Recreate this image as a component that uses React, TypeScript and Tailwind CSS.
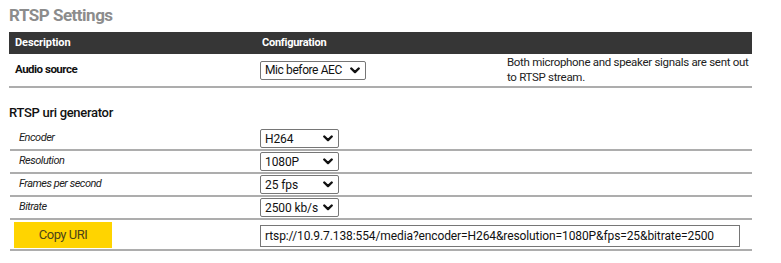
import React, { useState } from 'react';

const Chevron: React.FC = () => (
  <svg width="10" height="7" viewBox="0 0 10 7" className="shrink-0">
    <path d="M1.3 1.5 L5 5.1 L8.7 1.5" fill="none" stroke="#111" strokeWidth="2.4" strokeLinecap="round" strokeLinejoin="round" />
  </svg>
);

const SelectBox: React.FC<{ value: string; width?: string; track?: string }> = ({
  value,
  width = 'w-[79px]',
  track = 'tracking-[-0.1px]',
}) => (
  <div className={`${width} h-[19px] flex items-center justify-between gap-[4px] pl-[4px] pr-[5px] border border-[#767676] rounded-[2px] bg-white text-[12px] ${track} text-[#111] cursor-default`}>
    <span className="leading-none whitespace-nowrap">{value}</span>
    <Chevron />
  </div>
);

const GenRow: React.FC<{ label: string; value: string }> = ({ label, value }) => (
  <div className="h-[23px] flex items-center border-b-2 border-[#adadad] ml-[1px]">
    <div className="w-[246px] pl-[9px] text-[11px] italic tracking-[-0.5px] text-[#222]">{label}</div>
    <div className="pl-[4px]">
      <SelectBox value={value} />
    </div>
  </div>
);

export default function App() {
  const [copied, setCopied] = useState(false);
  const uri = 'rtsp://10.9.7.138:554/media?encoder=H264&resolution=1080P&fps=25&bitrate=2500';

  return (
    <div className="w-[781px] h-[263px] bg-white pl-[9px] pr-[29px] font-['Roboto',sans-serif] text-[#222]">
      <div className="pt-[4px] h-[32px] text-[17px] leading-[22px] font-bold tracking-[-0.5px] text-[#8c8c8c]">RTSP Settings</div>

      <div className="h-[22px] bg-[#363636] flex items-center text-white text-[11px] font-bold">
        <div className="w-[247px] pl-[6px] tracking-[-0.1px]">Description</div>
        <div className="w-[247px] pl-[6px] tracking-[-0.25px]">Configuration</div>
        <div className="flex-1" />
      </div>

      <div className="h-[34px] flex items-center border-b-2 border-[#adadad]">
        <div className="w-[247px] pl-[6px] text-[11.5px] font-bold tracking-[-0.5px] text-[#111]">Audio source</div>
        <div className="w-[247px] pl-[4px]">
          <SelectBox value="Mic before AEC" width="w-[106px]" track="tracking-[-0.4px]" />
        </div>
        <div className="flex-1 pl-[4px] text-[11.5px] leading-[15px] tracking-[-0.3px] text-[#222]">
          Both microphone and speaker signals are sent out to RTSP stream.
        </div>
      </div>

      <div className="mt-[15px] h-[25px] text-[13px] leading-[20px] font-medium tracking-[-0.3px] text-[#111]">RTSP uri generator</div>

      <GenRow label="Encoder" value="H264" />
      <GenRow label="Resolution" value="1080P" />
      <GenRow label="Frames per second" value="25 fps" />
      <GenRow label="Bitrate" value="2500 kb/s" />

      <div className="h-[31px] flex items-center border-b-2 border-[#adadad] ml-[1px]">
        <div className="w-[246px] pl-[4px]">
          <button
            onClick={() => setCopied(true)}
            className="w-[98px] h-[26px] bg-[#ffd400] text-[13px] tracking-[-0.5px] text-[#4d4419] flex items-center justify-center"
          >
            {copied ? 'Copied' : 'Copy URI'}
          </button>
        </div>
        <div className="pl-[4px]">
          <input
            readOnly
            value={uri}
            className="w-[480px] h-[22px] border border-[#767676] px-[4px] text-[12px] tracking-[-0.1px] text-[#111] outline-none"
          />
        </div>
      </div>
    </div>
  );
}
